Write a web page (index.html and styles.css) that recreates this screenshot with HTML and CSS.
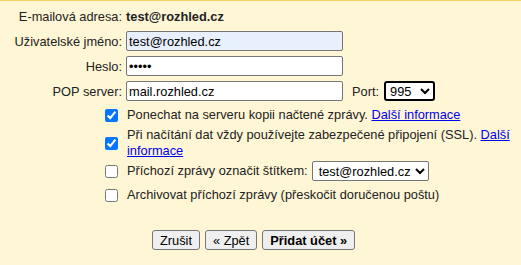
FILE: index.html
```html
<!DOCTYPE html>
<html lang="cs">
<head>
  <meta charset="UTF-8" />
  <title>Přidat účet</title>
  <link rel="stylesheet" href="styles.css">
</head>
<body>
  <div class="panel">
    <div class="fields">
      <span class="label">E-mailová adresa:</span>
      <span class="value">test@rozhled.cz</span>

      <label class="label" for="user">Uživatelské jméno:</label>
      <div class="cell"><input id="user" class="text autofill" type="text" value="test@rozhled.cz"></div>

      <label class="label" for="pass">Heslo:</label>
      <div class="cell"><input id="pass" class="text" type="password" value="aaaaa"></div>

      <label class="label" for="server">POP server:</label>
      <div class="cell">
        <input id="server" class="text" type="text" value="mail.rozhled.cz">
        <label class="port-label" for="port">Port:</label>
        <select id="port" class="port">
          <option>995</option>
          <option>110</option>
        </select>
      </div>
    </div>

    <div class="options">
      <label class="option">
        <input type="checkbox" checked>
        <span>Ponechat na serveru kopii načtené zprávy. <a href="#">Další informace</a></span>
      </label>
      <label class="option">
        <input type="checkbox" checked>
        <span>Při načítání dat vždy používejte zabezpečené připojení (SSL). <a href="#">Další informace</a></span>
      </label>
      <div class="option option-select">
        <input type="checkbox">
        <span>Příchozí zprávy označit štítkem:</span>
        <select class="tag">
          <option>test@rozhled.cz</option>
        </select>
      </div>
      <label class="option">
        <input type="checkbox">
        <span>Archivovat příchozí zprávy (přeskočit doručenou poštu)</span>
      </label>
    </div>

    <div class="buttons">
      <button type="button">Zrušit</button>
      <button type="button">« Zpět</button>
      <button type="button" class="primary">Přidat účet »</button>
    </div>
  </div>
</body>
</html>
```

FILE: styles.css
```css
html, body {
  margin: 0;
  padding: 0;
  background: #fff6d6;
  font-family: "Liberation Sans", Arial, sans-serif;
  font-size: 12.8px;
  color: #222;
}
.panel {
  border-top: 1px solid #f8d364;
  padding-top: 6px;
  height: 258px;
}
.fields {
  display: grid;
  grid-template-columns: 122px 1fr;
  column-gap: 4px;
  row-gap: 5px;
  align-items: center;
}
.label {
  text-align: right;
  line-height: 19px;
}
.value {
  font-weight: bold;
  line-height: 19px;
}
.cell {
  display: flex;
  align-items: center;
}
input.text {
  box-sizing: border-box;
  width: 217px;
  height: 20px;
  margin: 0;
  padding: 1px 2px;
  border: 1px solid #767676;
  border-radius: 2px;
  background: #fff;
  font-family: inherit;
  font-size: 12.8px;
  color: #000;
}
input.autofill {
  background: #e8f0fe;
}
.port-label {
  margin-left: 9px;
  margin-right: 5px;
}
select {
  font-family: inherit;
  font-size: 12.8px;
  color: #000;
  background: #fff;
  margin: 0;
}
.port {
  box-sizing: border-box;
  width: 51px;
  height: 20px;
  border: 2px solid #000;
  border-radius: 3px;
  padding: 0;
}
.options {
  margin-top: 4px;
  padding-left: 105px;
  padding-right: 8px;
}
.option {
  display: flex;
  align-items: center;
  padding: 2px 0;
  line-height: 16px;
}
.option input {
  margin: 0 9px 0 0;
  width: 13px;
  height: 13px;
  flex: none;
}
.option-select {
  padding: 0 0 4px;
}
.tag {
  box-sizing: border-box;
  width: 117px;
  height: 20px;
  margin-left: 4px;
  border: 1px solid #767676;
  border-radius: 2px;
  padding: 0 0 0 2px;
}
a {
  color: #0000ee;
}
.buttons {
  display: flex;
  gap: 5px;
  margin-top: 25px;
  padding-left: 152px;
}
button {
  height: 20px;
  padding: 0 7px;
  border: 1px solid #767676;
  border-radius: 3px;
  background: #efefef;
  font-family: inherit;
  font-size: 12.8px;
  color: #000;
}
button.primary {
  font-weight: bold;
}
```
